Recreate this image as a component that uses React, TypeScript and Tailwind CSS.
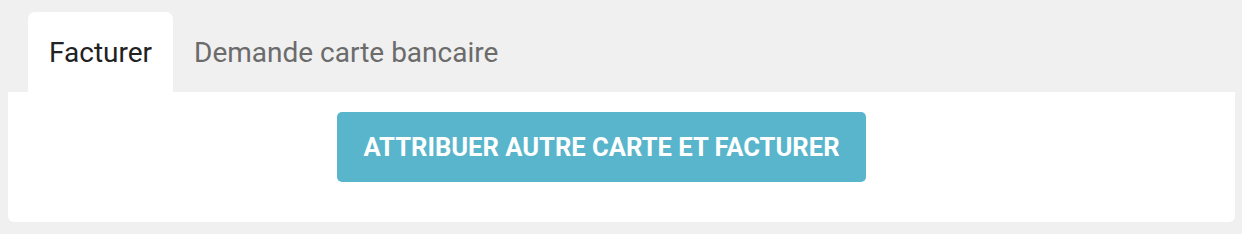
export default function App() {
  return (
    <div className="w-[1242px] h-[234px] bg-[#f0f0f0] pl-[8px] pr-[7px] pt-[12px] pb-[12px] flex flex-col" style={{ fontFamily: "Roboto, 'Liberation Sans', sans-serif" }}>
      <div className="flex pl-[20px] h-[80px]">
        <div className="h-full px-[21px] bg-white rounded-t-[7px] flex items-center text-[28px] text-[#222222] pt-[2px]">Facturer</div>
        <div className="h-full px-[21px] flex items-center text-[28px] text-[#6b6b6b] pt-[2px]">Demande carte bancaire</div>
      </div>
      <div className="flex-1 bg-white rounded-b-[6px] pl-[329px] pt-[20px]">
        <button className="w-[529px] h-[70px] rounded-[5px] bg-[#58b5cb] text-white text-[25.6px] font-bold flex items-center justify-center">ATTRIBUER AUTRE CARTE ET FACTURER</button>
      </div>
    </div>
  );
}
